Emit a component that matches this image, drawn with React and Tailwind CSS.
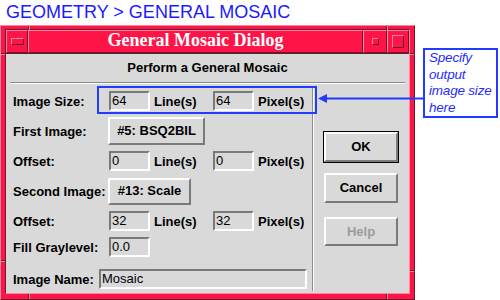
const raised = "border-2 border-t-white border-l-white border-b-[#7a7a7a] border-r-[#7a7a7a]";
const sunken = "border-2 border-t-[#7a7a7a] border-l-[#7a7a7a] border-b-white border-r-white";

function Field({ value, className = "w-[41px]" }) {
  return (
    <div className={`${sunken} ${className} h-[20px] pl-[1px] text-[13px] leading-[16px] text-black`}>{value}</div>
  );
}

function Label({ children, className = "w-[96px]" }) {
  return <span className={`${className} text-[13px] font-bold leading-[15px] text-black`}>{children}</span>;
}

function SizeRow({ label, a, b, className = "h-[30px]" }) {
  return (
    <div className={`flex items-center pl-[7px] ${className}`}>
      <Label>{label}</Label>
      <Field value={a} />
      <Label className="ml-[4px] w-[59px]">Line(s)</Label>
      <Field value={b} />
      <Label className="ml-[4px]">Pixel(s)</Label>
    </div>
  );
}

function Notch({ className }) {
  return <div className={`absolute ${className}`} />;
}

function Window() {
  return (
    <div className="relative flex h-[275px] w-[415px] flex-col border border-t-[#ff86a2] border-l-[#ff86a2] border-b-[#6b1a2e] border-r-[#6b1a2e] bg-[#ff1447] px-[4px] pt-[3px] pb-[5px]">
      {/* resize handle notches */}
      <Notch className="left-[27px] top-0 h-[4px] w-[1px] bg-[#6b1a2e]" />
      <Notch className="left-[28px] top-0 h-[4px] w-[1px] bg-[#ff86a2]" />
      <Notch className="left-[385px] top-0 h-[4px] w-[1px] bg-[#6b1a2e]" />
      <Notch className="left-[386px] top-0 h-[4px] w-[1px] bg-[#ff86a2]" />
      <Notch className="left-[27px] bottom-0 h-[5px] w-[1px] bg-[#6b1a2e]" />
      <Notch className="left-[28px] bottom-0 h-[5px] w-[1px] bg-[#ff86a2]" />
      <Notch className="left-[385px] bottom-0 h-[5px] w-[1px] bg-[#6b1a2e]" />
      <Notch className="left-[386px] bottom-0 h-[5px] w-[1px] bg-[#ff86a2]" />
      <Notch className="left-0 top-[27px] h-[1px] w-[4px] bg-[#6b1a2e]" />
      <Notch className="left-0 top-[28px] h-[1px] w-[4px] bg-[#ff86a2]" />
      <Notch className="right-0 top-[27px] h-[1px] w-[4px] bg-[#6b1a2e]" />
      <Notch className="right-0 top-[28px] h-[1px] w-[4px] bg-[#ff86a2]" />
      <Notch className="left-0 top-[234px] h-[1px] w-[4px] bg-[#6b1a2e]" />
      <Notch className="left-0 top-[235px] h-[1px] w-[4px] bg-[#ff86a2]" />
      <Notch className="right-0 top-[244px] h-[1px] w-[4px] bg-[#6b1a2e]" />
      <Notch className="right-0 top-[245px] h-[1px] w-[4px] bg-[#ff86a2]" />

      <div className="flex flex-1 flex-col border border-t-[#6b1a2e] border-l-[#6b1a2e] border-b-[#ff86a2] border-r-[#ff86a2]">
        {/* title bar */}
        <div className="flex h-[23px]">
          <div className="flex w-[22px] items-center justify-center border border-t-[#ff86a2] border-l-[#ff86a2] border-b-[#6b1a2e] border-r-[#6b1a2e]">
            <div className="h-[7px] w-[13px] border border-t-[#ff86a2] border-l-[#ff86a2] border-b-[#6b1a2e] border-r-[#6b1a2e]" />
          </div>
          <div className="flex flex-1 items-center justify-center border border-t-[#ff86a2] border-l-[#ff86a2] border-b-[#6b1a2e] border-r-[#6b1a2e] pb-[2px]">
            <span className="font-['Liberation_Serif','Times_New_Roman',serif] text-[18px] font-bold leading-[19px] text-white">
              General Mosaic Dialog
            </span>
          </div>
          <div className="flex w-[24px] items-center justify-center border border-t-[#ff86a2] border-l-[#ff86a2] border-b-[#6b1a2e] border-r-[#6b1a2e]">
            <div className="h-[7px] w-[7px] border border-t-[#ff86a2] border-l-[#ff86a2] border-b-[#6b1a2e] border-r-[#6b1a2e]" />
          </div>
          <div className="flex w-[22px] items-center justify-center border border-t-[#ff86a2] border-l-[#ff86a2] border-b-[#6b1a2e] border-r-[#6b1a2e]">
            <div className="h-[13px] w-[12px] border border-t-[#ff86a2] border-l-[#ff86a2] border-b-[#6b1a2e] border-r-[#6b1a2e]" />
          </div>
        </div>

        {/* dialog body */}
        <div className="flex flex-1 flex-col border-t border-t-[#6b1a2e] bg-[#d9d9d9]">
          <div className="pt-[6px] text-center text-[13px] font-bold leading-[15px] text-black">Perform a General Mosaic</div>
          <div className="mx-[4px] mt-[7px] h-[2px] border-t border-t-[#8a8a8a] border-b border-b-white" />

          <div className="flex flex-1">
            <div className="flex w-[306px] flex-col pt-[2px]">
              <SizeRow label="Image Size:" a="64" b="64" />
              <div className="flex h-[30px] items-center pl-[7px]">
                <Label>First Image:</Label>
                <div className={`${raised} -ml-[1px] flex h-[28px] w-[97px] items-center justify-center text-[13px] font-bold`}>
                  #5: BSQ2BIL
                </div>
              </div>
              <SizeRow label="Offset:" a="0" b="0" />
              <div className="flex h-[30px] items-center pl-[7px]">
                <Label>Second Image:</Label>
                <div className={`${raised} -ml-[1px] flex h-[27px] w-[83px] items-center justify-center text-[13px] font-bold`}>
                  #13: Scale
                </div>
              </div>
              <SizeRow label="Offset:" a="32" b="32" />
              <div className="flex h-[22px] items-center pl-[7px]">
                <Label>Fill Graylevel:</Label>
                <Field value="0.0" />
              </div>
              <div className="mt-[11px] flex h-[20px] items-center pl-[7px]">
                <Label className="w-[86px]">Image Name:</Label>
                <Field value="Mosaic" className="w-[208px]" />
              </div>
            </div>

            <div className="mt-[3px] mb-[2px] w-[2px] border-l border-l-[#8a8a8a] border-r border-r-white" />

            <div className="flex flex-1 flex-col">
              <div className="mt-[47px] ml-[9px] w-[76px] border border-black">
                <div className={`${raised} flex h-[30px] items-center justify-center text-[13px] font-bold`}>OK</div>
              </div>
              <div className={`${raised} mt-[10px] ml-[10px] flex h-[30px] w-[74px] items-center justify-center text-[13px] font-bold`}>
                Cancel
              </div>
              <div className={`${raised} mt-[14px] ml-[10px] flex h-[29px] w-[74px] items-center justify-center text-[13px] font-bold text-[#9c9c9c]`}>
                Help
              </div>
            </div>
          </div>
        </div>
      </div>
    </div>
  );
}

export default function App() {
  return (
    <div className="relative h-[300px] w-[500px] overflow-hidden bg-white font-['Liberation_Sans',Arial,sans-serif]">
      <div className="h-[25px] pl-[6px] text-[18px] leading-[25px] text-[#1a1aff]">GEOMETRY &gt; GENERAL MOSAIC</div>
      <div className="flex">
        <Window />
        <div className="mt-[23px] ml-[8px] h-[70px] w-[75px] whitespace-nowrap border-2 border-[#1f3cff] pl-[4px] text-[13.5px] italic leading-[16.5px] tracking-[-0.2px] text-[#1f2cff]">
          Specify
          <br />
          output
          <br />
          image size
          <br />
          here
        </div>
      </div>

      {/* annotation: highlight box and arrow */}
      <div className="absolute left-[97px] top-[86px] h-[28px] w-[220px] border-2 border-[#1f3cff]" />
      <svg className="absolute left-[316px] top-[90px]" width="108" height="18" viewBox="0 0 108 18">
        <line x1="9" y1="8.5" x2="107" y2="8.5" stroke="#1f3cff" strokeWidth="2" />
        <polygon points="2,8.5 11,4 11,13" fill="#1f3cff" />
      </svg>
    </div>
  );
}
